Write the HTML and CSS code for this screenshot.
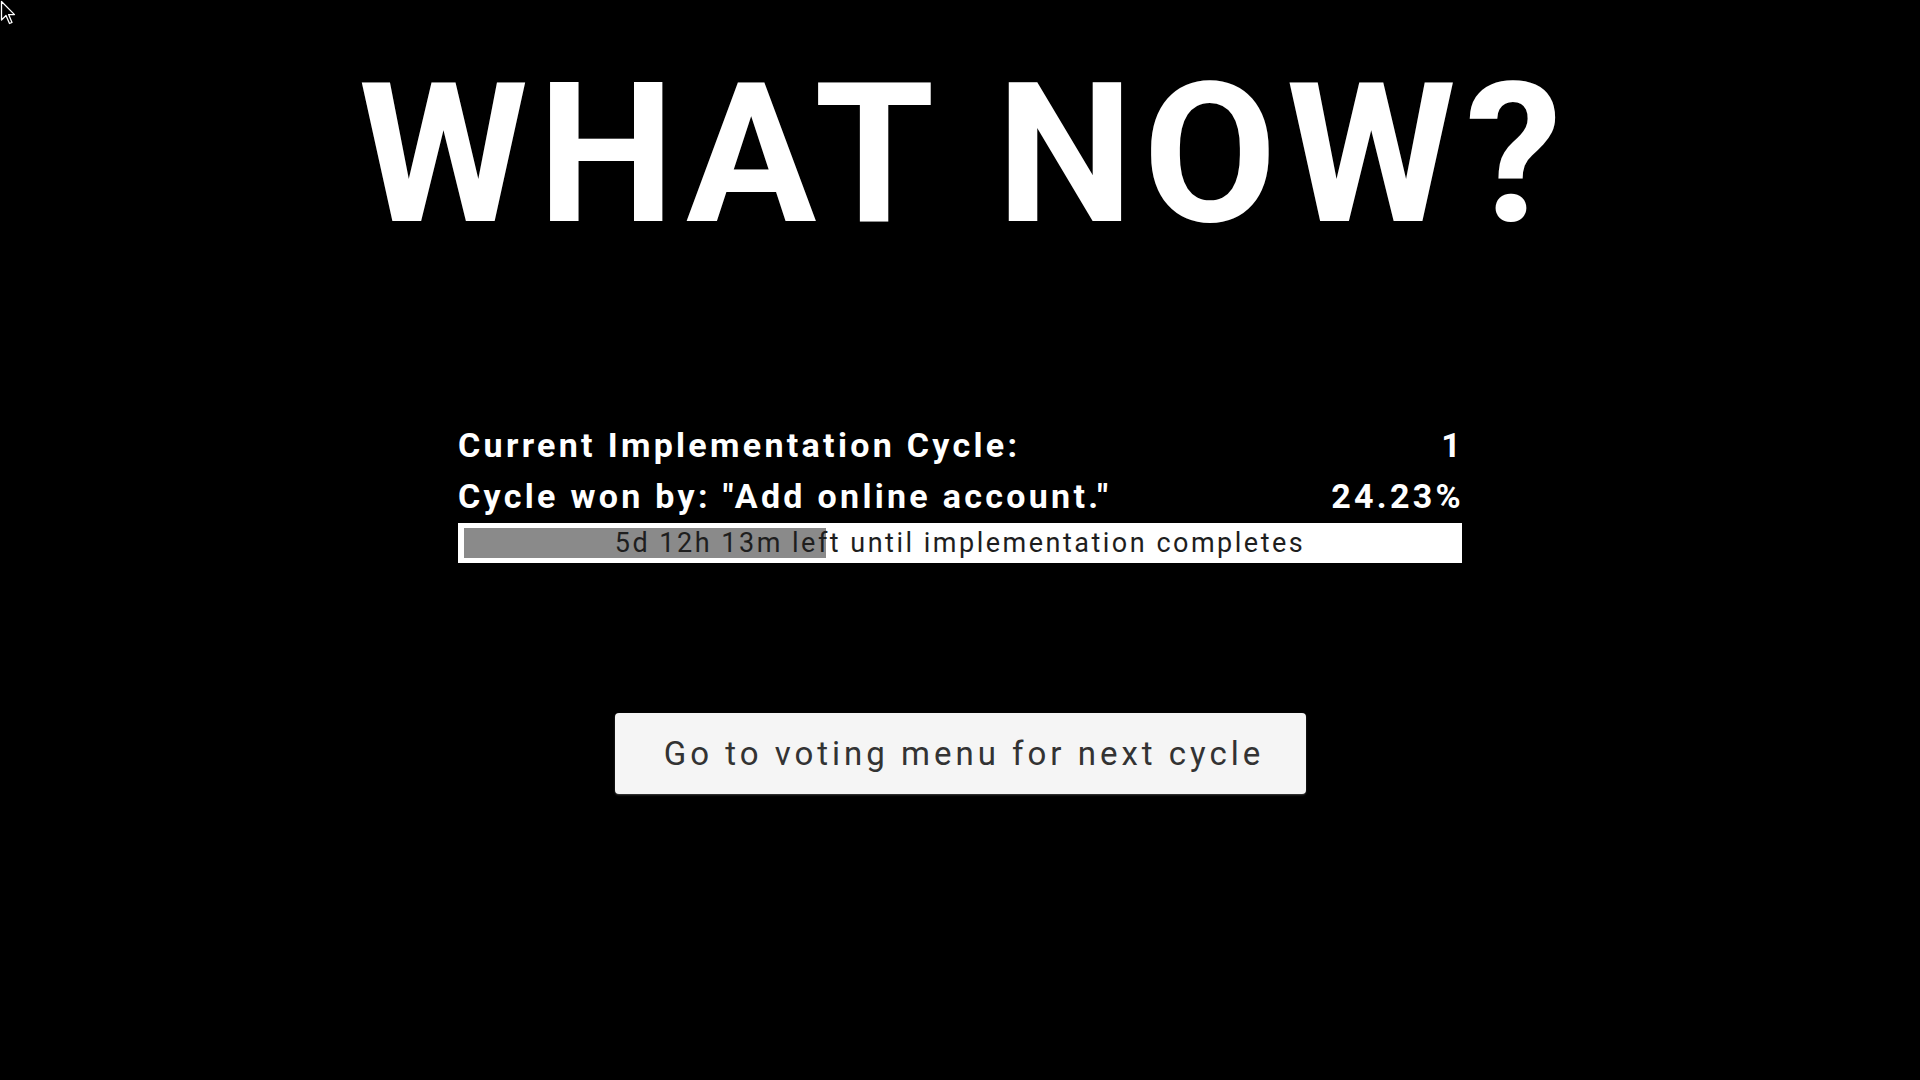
FILE: index.html
```html
<!DOCTYPE html>
<html lang="en">
<head>
<meta charset="utf-8">
<title>What now?</title>
<link rel="stylesheet" href="styles.css">
</head>
<body>
<svg class="cursor" width="16" height="26" viewBox="0 0 16 26" aria-hidden="true">
  <path d="M1.5 1.5 L1.5 20 L6 15.5 L9.5 23.5 L12 22.4 L8.6 14.6 L14.5 14.6 Z" fill="#000" stroke="#fff" stroke-width="1.3" stroke-linejoin="round"/>
</svg>
<main class="page">
  <h1 class="title">WHAT NOW?</h1>
  <section class="info">
    <div class="row"><span>Current Implementation Cycle:</span><span>1</span></div>
    <div class="row"><span>Cycle won by: "Add online account."</span><span>24.23%</span></div>
    <div class="bar">
      <div class="track"><div class="fill" style="width: 36.5%"></div></div>
      <div class="bar-label">5d 12h 13m left until implementation completes</div>
    </div>
  </section>
  <button class="next">Go to voting menu for next cycle</button>
</main>
</body>
</html>
```
FILE: styles.css
```css
html, body {
  margin: 0;
  padding: 0;
  background: #000;
  width: 100%;
  height: 100%;
  overflow: hidden;
}

body {
  font-family: Roboto, "Liberation Sans", sans-serif;
  color: #fff;
}

.cursor {
  position: absolute;
  left: 0;
  top: 0;
}

.page {
  display: flex;
  flex-direction: column;
  align-items: center;
}

.title {
  margin: 58px 0 0 0;
  font-size: 194px;
  line-height: 1;
  font-weight: 700;
  letter-spacing: 9.5px;
  padding-left: 10px;
  color: #fff;
}

.info {
  margin-top: 168px;
  width: 1004px;
  display: flex;
  flex-direction: column;
}

.row {
  display: flex;
  justify-content: space-between;
  font-size: 34px;
  font-weight: 700;
  line-height: 51px;
  letter-spacing: 3.3px;
}

.row span:last-child {
  margin-right: -2px;
}

.bar {
  position: relative;
  height: 40px;
  background: #fff;
  margin-top: 1px;
  padding: 5px 5px 5px 6px;
  box-sizing: border-box;
}

.track {
  height: 30px;
}

.fill {
  height: 100%;
  background: #8a8a8a;
}

.bar-label {
  position: absolute;
  left: 0;
  right: 0;
  top: 0;
  height: 40px;
  line-height: 40px;
  text-align: center;
  font-size: 27px;
  color: #1e1e1e;
  letter-spacing: 2.5px;
}

.next {
  margin-top: 150px;
  width: 691px;
  height: 81px;
  background: #f5f5f5;
  border: none;
  border-radius: 4px;
  box-shadow: 0 1px 2px rgba(255, 255, 255, 0.25);
  font-family: Roboto, "Liberation Sans", sans-serif;
  font-size: 33px;
  letter-spacing: 4px;
  color: #333;
  padding: 0 0 0 8px;
}
```
